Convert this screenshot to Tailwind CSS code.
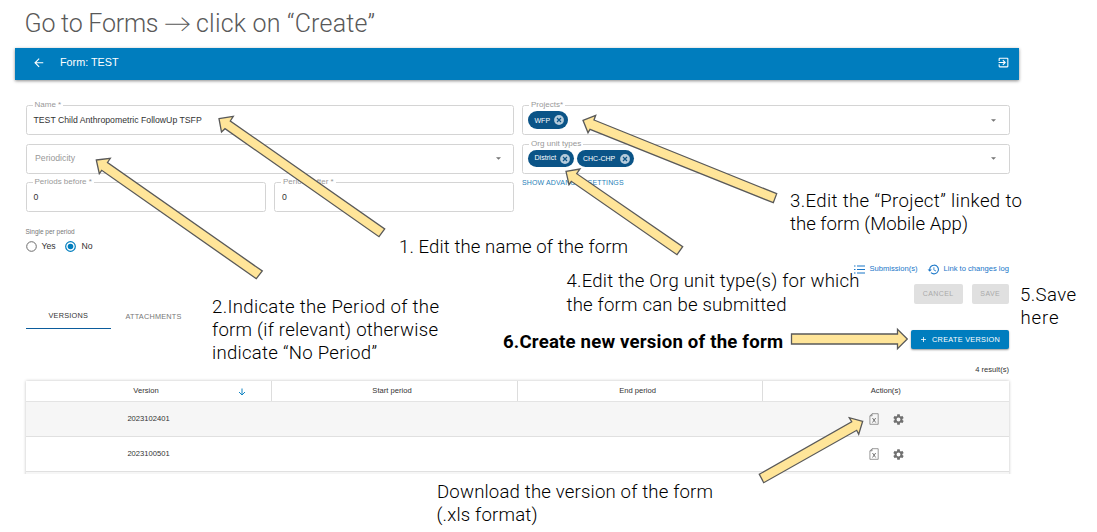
<!DOCTYPE html>
<html lang="en">
<head>
<meta charset="utf-8">
<title>Form: TEST</title>
<script src="https://cdn.jsdelivr.net/npm/@tailwindcss/browser@4"></script>
</head>
<body class="relative w-[1097px] h-[532px] overflow-hidden bg-white font-['Liberation_Sans',sans-serif] text-[8.7px] leading-none text-[#333]">

<header class="mt-[48px] ml-[15px] w-[1003.5px] h-[31.5px] bg-[#007dbe] text-white flex items-center pl-[17px] pr-[9px] pb-[2.500px] shadow-[0_1px_3px_rgba(0,0,0,0.45)]">
  <svg class="w-[13.500px] h-[13.500px]" viewBox="0 0 24 24" fill="currentColor"><path d="M20 11H7.830l5.590-5.590L12 4l-8 8 8 8 1.410-1.410L7.830 13H20v-2z"/></svg>
  <h1 class="ml-[14.500px] text-[10.8px]">Form: TEST</h1>
  <svg class="ml-auto w-[13px] h-[13px]" viewBox="0 0 24 24" fill="currentColor"><path d="M10.090 15.590L11.500 17l5-5-5-5-1.410 1.410L12.670 11H3v2h9.670l-2.580 2.590zM19 3H5a2 2 0 0 0-2 2v4h2V5h14v14H5v-4H3v4a2 2 0 0 0 2 2h14a2 2 0 0 0 2-2V5a2 2 0 0 0-2-2z"/></svg>
</header>

<main class="ml-[25.5px] w-[984px] pt-[25.500px]">
  <section class="flex gap-[8px] h-[107px]">
    <div class="w-[488.500px] flex flex-col gap-[8.500px]">
      <div class="relative h-[30px] border border-[#d4d4d4] rounded-[2.500px] flex items-center px-[7px]">
        <span class="absolute -top-[5px] left-[6px] px-[2px] bg-white text-[8px] text-[#999]">Name *</span>
        <span>TEST Child Anthropometric FollowUp TSFP</span>
      </div>
      <div class="h-[30px] border border-[#d4d4d4] rounded-[2.500px] flex items-center justify-between pl-[8.500px] pr-[12.500px]">
        <span class="text-[#999]">Periodicity</span>
        <svg class="w-[5px] h-[3px]" viewBox="0 0 10 5" fill="#757575"><path d="M0 0h10L5 5z"/></svg>
      </div>
      <div class="flex gap-[8px]">
        <div class="relative w-[240.500px] h-[30px] border border-[#d4d4d4] rounded-[2.500px] flex items-center px-[7px]">
          <span class="absolute -top-[5px] left-[6px] px-[2px] bg-white text-[8px] text-[#999]">Periods before *</span>
          <span>0</span>
        </div>
        <div class="relative w-[240px] h-[30px] border border-[#d4d4d4] rounded-[2.500px] flex items-center px-[7px]">
          <span class="absolute -top-[5px] left-[6px] px-[2px] bg-white text-[8px] text-[#999]">Periods after *</span>
          <span>0</span>
        </div>
      </div>
    </div>
    <div class="w-[487.500px] flex flex-col gap-[8.500px]">
      <div class="relative h-[30px] border border-[#d4d4d4] rounded-[2.500px] flex items-center pl-[5px] pr-[12.500px]">
        <span class="absolute -top-[5px] left-[6px] px-[2px] bg-white text-[8px] text-[#999]">Projects*</span>
        <span class="flex items-center justify-between w-[39.500px] h-[17.500px] rounded-full bg-[#0b5487] pl-[6.500px] pr-[3.500px] text-white text-[7px]">WFP
          <svg class="w-[10px] h-[10px]" viewBox="0 0 10 10"><circle cx="5" cy="5" r="4.900" fill="#b5cbdb"/><path d="M3 3l4 4M7 3l-4 4" stroke="#0b5487" stroke-width="1.200"/></svg>
        </span>
        <svg class="ml-auto w-[5px] h-[3px]" viewBox="0 0 10 5" fill="#757575"><path d="M0 0h10L5 5z"/></svg>
      </div>
      <div class="relative h-[30px] border border-[#d4d4d4] rounded-[2.500px] flex items-center gap-[3px] pl-[5px] pr-[12.500px]">
        <span class="absolute -top-[5px] left-[6px] px-[2px] bg-white text-[8.100px] text-[#999]">Org unit types</span>
        <span class="flex items-center justify-between w-[45.500px] h-[17.500px] rounded-full bg-[#0b5487] pl-[6.500px] pr-[3.500px] text-white text-[7.100px]">District
          <svg class="w-[10px] h-[10px]" viewBox="0 0 10 10"><circle cx="5" cy="5" r="4.900" fill="#b5cbdb"/><path d="M3 3l4 4M7 3l-4 4" stroke="#0b5487" stroke-width="1.200"/></svg>
        </span>
        <span class="flex items-center justify-between w-[57px] h-[17.500px] rounded-full bg-[#0b5487] pl-[6.500px] pr-[3.500px] text-white text-[7px]">CHC-CHP
          <svg class="w-[10px] h-[10px]" viewBox="0 0 10 10"><circle cx="5" cy="5" r="4.900" fill="#b5cbdb"/><path d="M3 3l4 4M7 3l-4 4" stroke="#0b5487" stroke-width="1.200"/></svg>
        </span>
        <svg class="ml-auto w-[5px] h-[3px]" viewBox="0 0 10 5" fill="#757575"><path d="M0 0h10L5 5z"/></svg>
      </div>
      <a class="-mt-[3.500px] text-[7px] tracking-[0.140px] text-[#1f7fb8]">SHOW ADVANCED SETTINGS</a>
    </div>
  </section>

  <section class="pt-[17px] h-[52px]">
    <p class="text-[6.500px] text-[#777]">Single per period</p>
    <div class="mt-[5.500px] flex items-center">
      <svg class="w-[11px] h-[11px]" viewBox="0 0 11 11"><circle cx="5.500" cy="5.500" r="4.800" fill="none" stroke="#6b6b6b"/></svg>
      <span class="ml-[5px] w-[23.500px]">Yes</span>
      <svg class="w-[11px] h-[11px]" viewBox="0 0 11 11"><circle cx="5.500" cy="5.500" r="4.800" fill="none" stroke="#007dbe" stroke-width="1.200"/><circle cx="5.500" cy="5.500" r="2.800" fill="#007dbe"/></svg>
      <span class="ml-[5.500px]">No</span>
    </div>
  </section>

  <section class="flex justify-end items-center h-[10px] pr-[0.500px] text-[7.600px] text-[#1976c8]">
    <svg class="w-[11px] h-[9px]" viewBox="0 0 11 9" stroke="currentColor"><path d="M0 1h1.500M3 1h8M0 4.500h1.500M3 4.500h8M0 8h1.500M3 8h8" stroke-width="1.100"/></svg>
    <span class="ml-[4.500px]">Submission(s)</span>
    <svg class="ml-[9.500px] w-[13px] h-[13px]" viewBox="0 0 24 24" fill="currentColor"><path d="M13 3a9 9 0 0 0-9 9H1l3.890 3.890.070.140L9 12H6a7 7 0 1 1 2.060 4.940l-1.420 1.420A9 9 0 1 0 13 3zm-1 5v5l4.280 2.540.720-1.210-3.500-2.080V8H12z"/></svg>
    <span class="ml-[3.500px]">Link to changes log</span>
  </section>

  <section class="mt-[10px] flex justify-end gap-[9px] pr-[0.500px] text-[7px] tracking-[0.400px] text-[#aaa]">
    <div class="w-[48.500px] h-[19.500px] rounded-[2px] bg-[#e0e0e0] flex items-center justify-center">CANCEL</div>
    <div class="w-[37.500px] h-[19.500px] rounded-[2px] bg-[#e0e0e0] flex items-center justify-center">SAVE</div>
  </section>

  <nav class="flex h-[25.500px] mb-[0.500px] text-[7.300px] tracking-[0.230px]">
    <div class="w-[85.500px] flex flex-col items-center"><span class="flex-1 flex items-center pt-px">VERSIONS</span><span class="w-full h-[1.300px] bg-[#0b5c9c]"></span></div>
    <div class="w-[85px] flex items-center justify-center text-[#777]">ATTACHMENTS</div>
  </nav>

  <section class="flex justify-end pr-[0.500px]">
    <div class="w-[98px] h-[19.500px] rounded-[2px] bg-[#007dbe] text-white text-[7.300px] tracking-[0.300px] flex items-center pl-[10px] shadow-[0_1px_2px_rgba(0,0,0,0.4)]">
      <svg class="w-[5px] h-[5px] mr-[6px]" viewBox="0 0 5 5" stroke="#fff" stroke-width=".8"><path d="M2.500 0v5M0 2.500h5"/></svg>
      CREATE VERSION
    </div>
  </section>

  <p class="mt-[17px] pr-[0.500px] text-right text-[7.600px]">4 result(s)</p>

  <div class="mt-[4.500px] h-[96px] overflow-hidden px-[3px] -mx-[3px] pt-[3px]">
    <div class="h-[120px] w-[983.500px] shadow-[0_0_3px_rgba(0,0,0,0.25)] text-[7.600px]">
      <div class="grid grid-cols-[246px_246px_245px_246.5px] h-[21px] border-b border-[#e4e4e4] text-center">
        <div class="relative border-r border-[#ddd] pr-[4px] flex items-center justify-center">Version
          <svg class="absolute right-[24.500px] top-[6.500px] w-[8px] h-[8px]" viewBox="0 0 8 8" fill="none" stroke="#1284c2"><path d="M4 .500v6.500M1 4l3 3 3-3"/></svg>
        </div>
        <div class="border-r border-[#ddd] pr-[4px] flex items-center justify-center">Start period</div>
        <div class="border-r border-[#ddd] pr-[4px] flex items-center justify-center">End period</div>
        <div class="flex items-center justify-center">Action(s)</div>
      </div>
      <div class="grid grid-cols-[246px_491px_246.5px] h-[35px] bg-[#f6f6f6] border-b border-[#e0e0e0] items-center">
        <div class="text-center">2023102401</div><div></div>
        <div class="flex justify-center items-center gap-[13px] pl-[2px]">
          <svg class="w-[10px] h-[12px]" viewBox="0 0 10 12" fill="none" stroke="#808080" stroke-width=".8"><path d="M3.200.700h6v10.600H.900V3z"/><path d="M3.200.700V3H.900z" fill="#aaa" stroke-width=".5"/><path d="M3.500 5l3.200 4.500M6.700 5L3.500 9.500" stroke="#555"/></svg>
          <svg class="w-[13px] h-[13px]" viewBox="0 0 24 24" fill="#707070"><path d="M19.140 12.940a7.500 7.500 0 0 0 0-1.880l2.030-1.580a.5.500 0 0 0 .120-.610l-1.920-3.320a.5.500 0 0 0-.590-.220l-2.390.960a7 7 0 0 0-1.620-.940l-.360-2.540a.5.500 0 0 0-.480-.410h-3.840a.5.500 0 0 0-.470.410l-.360 2.540a7.300 7.300 0 0 0-1.620.940l-2.390-.960a.5.500 0 0 0-.590.220L2.740 8.870a.5.500 0 0 0 .120.610l2.030 1.580a7.500 7.500 0 0 0 0 1.880l-2.030 1.580a.5.500 0 0 0-.120.610l1.920 3.320c.120.220.370.290.590.220l2.390-.960c.5.380 1.030.700 1.620.940l.360 2.540c.050.240.240.410.480.410h3.840c.240 0 .440-.170.470-.410l.360-2.540a7.300 7.300 0 0 0 1.620-.940l2.390.960c.220.080.470 0 .590-.220l1.920-3.320a.5.500 0 0 0-.120-.610zM12 15.600a3.600 3.600 0 1 1 0-7.200 3.600 3.600 0 0 1 0 7.200z"/></svg>
        </div>
      </div>
      <div class="grid grid-cols-[246px_491px_246.5px] h-[35px] bg-white border-b border-[#e0e0e0] items-center">
        <div class="text-center">2023100501</div><div></div>
        <div class="flex justify-center items-center gap-[13px] pl-[2px]">
          <svg class="w-[10px] h-[12px]" viewBox="0 0 10 12" fill="none" stroke="#808080" stroke-width=".8"><path d="M3.200.700h6v10.600H.900V3z"/><path d="M3.200.700V3H.900z" fill="#aaa" stroke-width=".5"/><path d="M3.500 5l3.200 4.500M6.700 5L3.500 9.500" stroke="#555"/></svg>
          <svg class="w-[13px] h-[13px]" viewBox="0 0 24 24" fill="#707070"><path d="M19.140 12.940a7.500 7.500 0 0 0 0-1.880l2.030-1.580a.5.500 0 0 0 .120-.610l-1.920-3.320a.5.500 0 0 0-.590-.220l-2.390.960a7 7 0 0 0-1.620-.940l-.360-2.540a.5.500 0 0 0-.480-.410h-3.840a.5.500 0 0 0-.470.410l-.360 2.540a7.300 7.300 0 0 0-1.620.940l-2.390-.960a.5.500 0 0 0-.590.220L2.740 8.870a.5.500 0 0 0 .120.610l2.030 1.580a7.500 7.500 0 0 0 0 1.880l-2.030 1.580a.5.500 0 0 0-.120.610l1.920 3.320c.120.220.370.290.590.220l2.390-.960c.5.380 1.030.700 1.620.940l.360 2.540c.050.240.240.410.480.410h3.840c.240 0 .440-.170.470-.410l.360-2.540a7.300 7.300 0 0 0 1.620-.940l2.390.960c.220.080.470 0 .590-.220l1.920-3.320a.5.500 0 0 0-.120-.610zM12 15.600a3.600 3.600 0 1 1 0-7.200 3.600 3.600 0 0 1 0 7.200z"/></svg>
        </div>
      </div>
      <div class="h-[10px] bg-[#f6f6f6]"></div>
    </div>
  </div>
</main>

<!-- Slide annotations: heading, callout arrows and their captions -->
<svg class="absolute inset-0 w-[1097px] h-[532px] font-[Roboto,sans-serif] font-light text-[18.600px]" viewBox="0 0 1097 532">
  <g fill="#ffe599" stroke="#595959" stroke-width="1.300">
    <path d="M219 118.700L233.300 116.300 230.300 121 384.700 229 379 236.700 225 128.700 221.500 132z"/>
    <path d="M96.300 160L110.300 158.300 107.500 162.500 262.300 271 256.300 278.700 101.700 170.300 99.300 173.700z"/>
    <path d="M583 120.300L595.700 115.300 594 120 776.700 193.700 773.300 202.700 590 129.300 588 132.700z"/>
    <path d="M566 171.300L580 169 576.700 173.700 682.700 246.700 677 254.700 571.300 181.300 569 184.700z"/>
    <path d="M791.500 334H897.500V329.300L907.300 339 897.500 348.700V344H791.500z"/>
    <path d="M862.700 421.300L849.300 417.700 851.700 421.700 759.300 474.300 763.700 482.700 856.700 430.300 858.700 434.300z"/>
  </g>
  <text y="32" class="text-[25px]" fill="#595959"><tspan x="24.500" textLength="134">Go to Forms</tspan> <tspan x="163.500" class="font-[Lato]" textLength="28" lengthAdjust="spacingAndGlyphs">→</tspan> <tspan x="196" textLength="179">click on “Create”</tspan></text>
  <g fill="#000">
    <text x="399" y="252.500" textLength="229">1. Edit the name of the form</text>
    <text x="212" y="313" textLength="227">2.Indicate the Period of the</text>
    <text x="212" y="336" textLength="226">form (if relevant) otherwise</text>
    <text x="212" y="359" textLength="165">indicate “No Period”</text>
    <text x="790" y="207" textLength="232">3.Edit the “Project” linked to</text>
    <text x="790" y="230" textLength="178">the form (Mobile App)</text>
    <text x="566.500" y="287" textLength="293">4.Edit the Org unit type(s) for which</text>
    <text x="566.500" y="310.500" textLength="220">the form can be submitted</text>
    <text x="1020" y="301" textLength="56">5.Save</text>
    <text x="1020.500" y="324" textLength="38">here</text>
    <text x="503" y="348" textLength="280" class="font-bold">6.Create new version of the form</text>
    <text x="437" y="498" textLength="276">Download the version of the form</text>
    <text x="436.500" y="521" textLength="101">(.xls format)</text>
  </g>
</svg>
</body>
</html>
